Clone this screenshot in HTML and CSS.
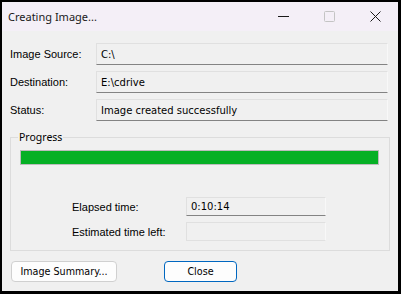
FILE: index.html
```html
<!DOCTYPE html>
<html lang="en">
<head>
  <meta charset="utf-8">
  <title>Creating Image...</title>
  <link rel="stylesheet" href="styles.css">
</head>
<body>
  <div class="window">
    <div class="titlebar">
      <span class="title">Creating Image...</span>
      <div class="caption-buttons">
        <span class="caption-btn">
          <svg width="11" height="11" viewBox="0 0 11 11"><path d="M0 5.5h11" stroke="#1a1a1a" stroke-width="1"/></svg>
        </span>
        <span class="caption-btn">
          <svg width="11" height="11" viewBox="0 0 11 11"><rect x="0.5" y="0.5" width="10" height="10" rx="1" fill="none" stroke="#c4c4c4"/></svg>
        </span>
        <span class="caption-btn">
          <svg width="11" height="11" viewBox="0 0 11 11"><path d="M0.5 0.5l10 10M10.5 0.5l-10 10" stroke="#1a1a1a" stroke-width="1"/></svg>
        </span>
      </div>
    </div>
    <div class="client">
      <div class="info-grid">
        <label>Image Source:</label>
        <div class="field">C:\</div>
        <label>Destination:</label>
        <div class="field">E:\cdrive</div>
        <label>Status:</label>
        <div class="field">Image created successfully</div>
      </div>
      <fieldset class="group">
        <legend>Progress</legend>
        <div class="progress"><div class="progress-fill" style="width: 100%"></div></div>
        <div class="time-grid">
          <label>Elapsed time:</label>
          <div class="field">0:10:14</div>
          <label>Estimated time left:</label>
          <div class="field disabled"></div>
        </div>
      </fieldset>
      <div class="buttons">
        <button class="btn">Image Summary...</button>
        <button class="btn default">Close</button>
      </div>
    </div>
  </div>
</body>
</html>
```

FILE: styles.css
```css
html, body {
  margin: 0;
  padding: 0;
}
body {
  font-family: "Liberation Sans", Arial, sans-serif;
  font-size: 11px;
  color: #000;
  background: #000;
}
.window {
  width: 401px;
  height: 294px;
  box-sizing: border-box;
  border: 2px solid #000;
  border-right-width: 3px;
  border-bottom-width: 3px;
  display: flex;
  flex-direction: column;
  background: #f0f0f0;
}
.titlebar {
  height: 29px;
  background: #f4eff7;
  display: flex;
  align-items: center;
  justify-content: space-between;
  padding-left: 6px;
}
.title {
  font-family: "Noto Sans", "Open Sans", sans-serif;
  font-size: 11px;
  color: #1a1a1a;
}
.caption-buttons {
  display: flex;
  height: 100%;
}
.caption-btn {
  width: 46px;
  display: flex;
  align-items: center;
  justify-content: center;
}
.client {
  flex: 1;
  padding: 12px 10px 0 8px;
}
.info-grid {
  display: grid;
  grid-template-columns: 86px 292px;
  row-gap: 6px;
  align-items: center;
}
.field {
  height: 22px;
  box-sizing: border-box;
  border: 1px solid #e0e0e0;
  border-right-color: #f8f8f8;
  border-bottom-color: #838383;
  padding: 0 4px;
  display: flex;
  align-items: center;
  font-family: "DejaVu Sans", sans-serif;
  font-size: 10px;
}
.field.disabled {
  border-bottom-color: #e0e0e0;
}
.group {
  margin: 9px 0 0 0;
  padding: 6px 10px 7px 9px;
  border: 1px solid #dcdcdc;
  width: 380px;
  box-sizing: border-box;
  height: 121px;
}
.group legend {
  padding: 0 1px;
  margin-left: -2px;
  font-family: "Noto Sans", "Open Sans", sans-serif;
  font-size: 10.5px;
  line-height: 14px;
}
.progress {
  height: 15px;
  box-sizing: border-box;
  border: 1px solid #bcbcbc;
  background: #e6e6e6;
}
.progress-fill {
  height: 100%;
  background: #06b025;
}
.time-grid {
  display: grid;
  grid-template-columns: 114px 140px;
  row-gap: 6px;
  margin: 32px 0 0 52px;
  align-items: center;
}
.time-grid .field {
  height: 19px;
}
.buttons {
  display: flex;
  gap: 47px;
  margin: 10px 0 0 1px;
}
.btn {
  height: 21px;
  box-sizing: border-box;
  background: #fdfdfd;
  border: 1px solid #d0d0d0;
  border-radius: 4px;
  font-family: "DejaVu Sans", sans-serif;
  font-size: 9.6px;
  padding: 0;
  width: 106px;
}
.btn.default {
  width: 73px;
  border-color: #0067c0;
}
```
